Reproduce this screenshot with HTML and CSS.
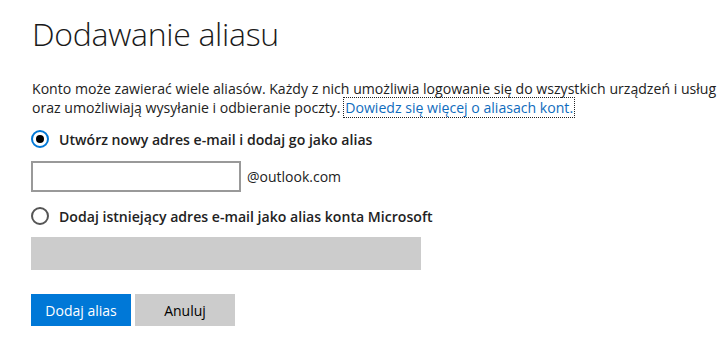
FILE: index.html
```html
<!DOCTYPE html>
<html lang="pl">
<head>
<meta charset="utf-8">
<title>Dodawanie aliasu</title>
<link rel="stylesheet" href="styles.css">
</head>
<body>
<main class="page">
  <h1 class="title">Dodawanie aliasu</h1>
  <p class="intro">Konto może zawierać wiele aliasów. Każdy z nich umożliwia logowanie się do wszystkich urządzeń i usług<br>oraz umożliwiają wysyłanie i odbieranie poczty. <a class="learn" href="#">Dowiedz się więcej o aliasach kont.</a></p>

  <div class="option">
    <span class="radio radio-on"><span class="dot"></span></span>
    <span class="option-label">Utwórz nowy adres e-mail i dodaj go jako alias</span>
  </div>
  <div class="new-row">
    <span class="field"></span>
    <span class="domain">@outlook.com</span>
  </div>

  <div class="option">
    <span class="radio"></span>
    <span class="option-label">Dodaj istniejący adres e-mail jako alias konta Microsoft</span>
  </div>
  <div class="field-disabled"></div>

  <div class="actions">
    <button class="btn btn-primary">Dodaj alias</button>
    <button class="btn btn-secondary">Anuluj</button>
  </div>
</main>
</body>
</html>
```
FILE: styles.css
```css
* { box-sizing: border-box; }
html, body { margin: 0; padding: 0; background: #fff; }
body {
  font-family: "Open Sans", "Noto Sans", sans-serif;
  color: #222;
  overflow: hidden;
}
.page {
  padding: 14px 0 0 31px;
  width: 722px;
}
.title {
  margin: 0 0 0 1px;
  font-weight: 300;
  font-size: 32px;
  line-height: 40px;
  color: #1a1a1a;
  letter-spacing: -0.3px;
}
.intro {
  margin: 25px 0 0 1px;
  font-size: 14.1px;
  line-height: 19px;
  white-space: nowrap;
  letter-spacing: 0;
}
.learn {
  color: #0f6cbd;
  text-decoration: none;
  outline: 1px dotted #222;
  outline-offset: 0;
  padding: 0 1px;
}
.option {
  display: flex;
  align-items: center;
  height: 18px;
  margin-top: 13px;
}
.radio {
  width: 18px;
  height: 18px;
  border: 2px solid #555;
  border-radius: 50%;
  display: flex;
  align-items: center;
  justify-content: center;
  flex: none;
}
.radio-on { border-color: #0078d7; }
.dot {
  width: 8px;
  height: 8px;
  border-radius: 50%;
  background: #000;
}
.option-label {
  margin-left: 10px;
  font-size: 14.1px;
  font-weight: 600;
  letter-spacing: 0;
}
.new-row {
  display: flex;
  align-items: center;
  margin-top: 13px;
  height: 31px;
}
.field {
  width: 210px;
  height: 31px;
  border: 2px solid #999;
  background: #fff;
}
.domain {
  margin-left: 6px;
  font-size: 14px;
}
.new-row + .option { margin-top: 15px; }
.field-disabled {
  margin-top: 12px;
  width: 390px;
  height: 33px;
  background: #ccc;
}
.actions {
  display: flex;
  gap: 4px;
  margin-top: 24px;
}
.btn {
  width: 100px;
  height: 32px;
  border: 0;
  font-family: inherit;
  font-size: 14px;
  padding: 0;
}
.btn-primary { background: #0078d7; color: #fff; }
.btn-secondary { background: #ccc; color: #000; }
```
